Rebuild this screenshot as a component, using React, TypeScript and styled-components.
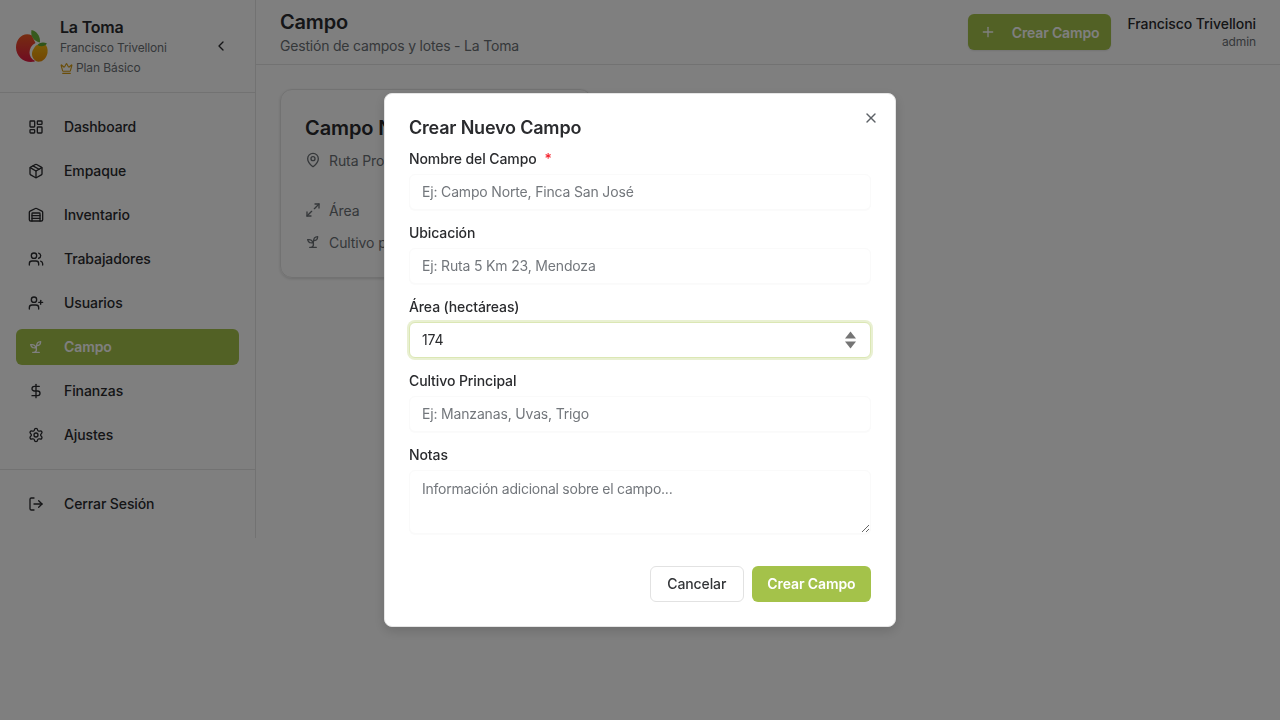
import styled, { createGlobalStyle } from 'styled-components'
import {
  ChevronLeft,
  Crown,
  DollarSign,
  LayoutDashboard,
  LogOut,
  MapPin,
  Maximize2,
  Package,
  Plus,
  Settings,
  UserPlus,
  Users,
  Warehouse,
  X,
} from 'lucide-react'

const GlobalStyle = createGlobalStyle`
  html, body {
    margin: 0;
    background: #fff;
  }
  * {
    box-sizing: border-box;
  }
  body {
    font-family: Inter, "Liberation Sans", sans-serif;
    color: #2a2b2e;
    letter-spacing: -0.1px;
  }
`

const Page = styled.div`
  display: flex;
  align-items: flex-start;
  min-height: 720px;
`

const Sidebar = styled.aside`
  width: 256px;
  flex: none;
  border-right: 1px solid #e5e5e5;
`

const Brand = styled.div`
  height: 93px;
  display: flex;
  align-items: center;
  padding: 0 16px;
  border-bottom: 1px solid #e5e5e5;
`

const BrandText = styled.div`
  margin-left: 12px;
  padding-bottom: 1px;
  flex: 1;
`

const BrandName = styled.div`
  font-size: 16px;
  line-height: 22px;
  font-weight: 600;
  letter-spacing: -0.2px;
  margin-top: 3px;
`

const BrandUser = styled.div`
  font-size: 12px;
  line-height: 20px;
  letter-spacing: -0.15px;
  color: #6b7075;
`

const Plan = styled.div`
  display: flex;
  align-items: center;
  gap: 3px;
  font-size: 12px;
  line-height: 20px;
  letter-spacing: -0.1px;
  color: #6b7075;
  svg {
    color: #d49b12;
  }
`

const Collapse = styled.button`
  border: 0;
  background: none;
  padding: 0;
  display: flex;
  margin-right: 10px;
  color: #2a2b2e;
`

const Nav = styled.nav`
  display: flex;
  flex-direction: column;
  gap: 8px;
  padding: 16px 16px 16px;
`

const NavItem = styled.a<{ $active?: boolean }>`
  height: 36px;
  display: flex;
  align-items: center;
  gap: 20px;
  padding: 0 12px;
  border-radius: 6px;
  font-size: 14px;
  font-weight: ${({ $active }) => ($active ? 600 : 450)};
  color: ${({ $active }) => ($active ? '#fff' : '#2a2b2e')};
  background: ${({ $active }) => ($active ? '#a4c24a' : 'transparent')};
`

const NavLabel = styled.span`
  margin-top: -2px;
`

const SidebarFooter = styled.div`
  border-top: 1px solid #e5e5e5;
  padding: 16px;
`

const Main = styled.main`
  flex: 1;
  min-width: 0;
`

const Header = styled.header`
  height: 65px;
  display: flex;
  align-items: center;
  justify-content: space-between;
  padding: 0 24px;
  border-bottom: 1px solid #e5e5e5;
`

const PageTitle = styled.h1`
  margin: 0;
  font-size: 20px;
  line-height: 28px;
  font-weight: 600;
  letter-spacing: -0.2px;
`

const PageSubtitle = styled.p`
  margin: 0;
  font-size: 14px;
  line-height: 20px;
  letter-spacing: -0.2px;
  color: #6b7075;
`

const HeaderRight = styled.div`
  display: flex;
  align-items: center;
  gap: 16px;
`

const Button = styled.button<{ $outline?: boolean }>`
  height: 36px;
  display: flex;
  align-items: center;
  font-family: inherit;
  font-size: 14px;
  letter-spacing: -0.1px;
  border-radius: 6px;
  padding: ${({ $outline }) => ($outline ? '0 16.5px 2px' : '0 15.5px 2px')};
  color: ${({ $outline }) => ($outline ? '#333538' : '#fff')};
  background: ${({ $outline }) => ($outline ? '#fff' : '#a4c24a')};
  border: ${({ $outline }) => ($outline ? '1px solid #e2e2e2' : '0')};
  font-weight: ${({ $outline }) => ($outline ? 500 : 600)};
`

const HeaderButton = styled(Button)`
  gap: 16px;
  padding: 0 12px;
  letter-spacing: -0.15px;
  box-shadow: 0 1px 2px rgba(0, 0, 0, 0.1);
`

const UserBox = styled.div`
  text-align: right;
  margin-top: -1px;
`

const UserName = styled.div`
  font-size: 14px;
  line-height: 20px;
  font-weight: 500;
  letter-spacing: -0.07px;
`

const UserRole = styled.div`
  font-size: 12px;
  line-height: 16px;
  color: #6b7075;
`

const Content = styled.div`
  padding: 24px;
`

const Card = styled.section`
  width: 312px;
  height: 189px;
  padding: 24px;
  border: 1px solid #e5e5e5;
  border-radius: 12px;
  box-shadow: 0 1px 3px rgba(0, 0, 0, 0.15);
  overflow: hidden;
`

const CardTitle = styled.h2`
  margin: 0;
  font-size: 20px;
  line-height: 28px;
  font-weight: 600;
  white-space: nowrap;
`

const CardRow = styled.div<{ $gap?: number }>`
  display: flex;
  align-items: center;
  gap: 8px;
  height: 20px;
  margin-top: ${({ $gap }) => $gap ?? 12}px;
  font-size: 14px;
  color: #6b7075;
  white-space: nowrap;
  svg {
    flex: none;
  }
`

const Overlay = styled.div`
  position: fixed;
  inset: 0;
  background: rgba(0, 0, 0, 0.5);
  display: flex;
  align-items: center;
  justify-content: center;
`

const Dialog = styled.form`
  position: relative;
  width: 512px;
  height: 534px;
  padding: 20px 24px 24px;
  background: #fff;
  border: 1px solid #e5e5e5;
  border-radius: 8px;
  box-shadow: 0 4px 12px rgba(0, 0, 0, 0.15);
`

const DialogTitle = styled.h2`
  margin: 0 0 7px;
  font-size: 18px;
  line-height: 28px;
  font-weight: 600;
  letter-spacing: -0.2px;
`

const CloseButton = styled.button`
  position: absolute;
  top: 16px;
  right: 16px;
  padding: 0;
  border: 0;
  background: none;
  display: flex;
  color: #5c6166;
`

const Field = styled.div`
  position: relative;
  display: flex;
  flex-direction: column;
  margin-bottom: 13px;
`

const Label = styled.label`
  height: 25px;
  font-size: 14px;
  line-height: 20px;
  font-weight: 500;
`

const Required = styled.span`
  margin-left: 8px;
  color: #f5222d;
`

const Input = styled.input`
  height: 36px;
  width: 100%;
  padding: 0 12px 2px;
  border: 1px solid #fafafa;
  border-radius: 6px;
  background: #fff;
  box-shadow: 0 1px 1px rgba(0, 0, 0, 0.02);
  font-family: inherit;
  font-size: 14px;
  letter-spacing: -0.17px;
  color: #2a2b2e;
  outline: none;
  &::placeholder {
    color: #73777c;
    opacity: 1;
  }
  &:focus {
    border-color: #dbe7b4;
    box-shadow: 0 0 0 2px #e9f0d2;
  }
  &::-webkit-inner-spin-button {
    appearance: none;
  }
`

const Spinner = styled.svg`
  position: absolute;
  right: 15px;
  bottom: 9px;
  pointer-events: none;
`

const TextArea = styled.textarea`
  display: block;
  height: 64px;
  width: 100%;
  padding: 8px 12px;
  border: 1px solid #fafafa;
  border-radius: 6px;
  box-shadow: 0 1px 1px rgba(0, 0, 0, 0.02);
  font-family: inherit;
  font-size: 14px;
  line-height: 20px;
  letter-spacing: -0.25px;
  outline: none;
  &::placeholder {
    color: #73777c;
    opacity: 1;
  }
`

const Actions = styled.div`
  display: flex;
  justify-content: flex-end;
  gap: 8px;
  margin-top: 32px;
`

const Logo = () => (
  <svg width="32" height="32" viewBox="0 0 32 32" style={{ flex: 'none' }}>
    <defs>
      <linearGradient id="apple" x1="0" y1="0" x2="0" y2="1">
        <stop offset="0" stopColor="#ee5a22" />
        <stop offset="1" stopColor="#e01a44" />
      </linearGradient>
      <linearGradient id="pear" x1="0" y1="0" x2="0" y2="1">
        <stop offset="0" stopColor="#f2b90f" />
        <stop offset="1" stopColor="#e88c08" />
      </linearGradient>
    </defs>
    <path
      d="M16 5.500C8 1.500 0 8 0 17.500 0 26 7 32 15 32c1.800 0 3.200-.3 4.200-.9-3.700-2-5.700-5-5.700-8.600 0-4 2-7.300 6-9.500L17 8z"
      fill="url(#apple)"
    />
    <path
      d="M20 15.500c2.500-1.500 5.500-.5 8.500-1.500 2.500 1.500 3.500 5 3 9-1 5-4.500 8.800-9 8.800-3.500-.5-7-4-6.500-8.800.3-3 2.500-5.500 4-7.500z"
      fill="url(#pear)"
    />
    <path d="M15.500 0c4.500 1 8.500 5 8.500 11 0 .5 0 1-.2 1.500-5-1-9.800-5.500-8.300-12.500z" fill="#6fb43a" />
    <path d="M21.500 15c1.500-2.500 6-3.500 9.500-1.500-2 3-6.500 3.500-9.500 1.500z" fill="#5ea832" />
  </svg>
)

// older lucide seedling: a stem on a base line with two narrow leaves
const SproutIcon = () => (
  <svg
    width="16"
    height="16"
    viewBox="0 0 24 24"
    fill="none"
    stroke="currentColor"
    strokeWidth="2"
    strokeLinecap="round"
    strokeLinejoin="round"
  >
    <path d="M7 20h10" />
    <path d="M10 20c5.500-2.500.8-6.400 3-10" />
    <path d="M9.500 9.400c1.100.8 1.800 2.200 2.300 3.700-2 .4-3.500.4-4.800-.3-1.200-.6-2.300-1.900-3-4.200 2.800-.5 4.400 0 5.500.8z" />
    <path d="M14.100 6a7 7 0 0 0-1.100 4c1.900-.1 3.300-.6 4.300-1.400 1-1 1.600-2.300 1.700-4.600-2.700.1-4 1-4.900 2z" />
  </svg>
)

const navItems = [
  { label: 'Dashboard', Icon: LayoutDashboard },
  { label: 'Empaque', Icon: Package },
  { label: 'Inventario', Icon: Warehouse },
  { label: 'Trabajadores', Icon: Users },
  { label: 'Usuarios', Icon: UserPlus },
  { label: 'Campo', Icon: SproutIcon, active: true },
  { label: 'Finanzas', Icon: DollarSign },
  { label: 'Ajustes', Icon: Settings },
]

export default function App() {
  return (
    <Page>
      <GlobalStyle />
      <Sidebar>
        <Brand>
          <Logo />
          <BrandText>
            <BrandName>La Toma</BrandName>
            <BrandUser>Francisco Trivelloni</BrandUser>
            <Plan>
              <Crown size={13} />
              Plan Básico
            </Plan>
          </BrandText>
          <Collapse type="button">
            <ChevronLeft size={16} />
          </Collapse>
        </Brand>
        <Nav>
          {navItems.map(({ label, Icon, active }) => (
            <NavItem key={label} $active={active}>
              <Icon size={16} />
              <NavLabel>{label}</NavLabel>
            </NavItem>
          ))}
        </Nav>
        <SidebarFooter>
          <NavItem>
            <LogOut size={16} />
            <NavLabel>Cerrar Sesión</NavLabel>
          </NavItem>
        </SidebarFooter>
      </Sidebar>
      <Main>
        <Header>
          <div>
            <PageTitle>Campo</PageTitle>
            <PageSubtitle>Gestión de campos y lotes - La Toma</PageSubtitle>
          </div>
          <HeaderRight>
            <HeaderButton type="button">
              <Plus size={16} />
              Crear Campo
            </HeaderButton>
            <UserBox>
              <UserName>Francisco Trivelloni</UserName>
              <UserRole>admin</UserRole>
            </UserBox>
          </HeaderRight>
        </Header>
        <Content>
          <Card>
            <CardTitle>Campo Norte</CardTitle>
            <CardRow $gap={8}>
              <MapPin size={16} />
              Ruta Provincial 5
            </CardRow>
            <CardRow $gap={30}>
              <Maximize2 size={16} />
              Área
            </CardRow>
            <CardRow>
              <SproutIcon />
              Cultivo principal
            </CardRow>
          </Card>
        </Content>
      </Main>
      <Overlay>
        <Dialog onSubmit={(e) => e.preventDefault()}>
          <CloseButton type="button">
            <X size={16} />
          </CloseButton>
          <DialogTitle>Crear Nuevo Campo</DialogTitle>
          <Field>
            <Label>
              Nombre del Campo<Required>*</Required>
            </Label>
            <Input placeholder="Ej: Campo Norte, Finca San José" />
          </Field>
          <Field>
            <Label>Ubicación</Label>
            <Input placeholder="Ej: Ruta 5 Km 23, Mendoza" />
          </Field>
          <Field>
            <Label>Área (hectáreas)</Label>
            <Input type="number" defaultValue={174} autoFocus />
            <Spinner width="11" height="18" viewBox="0 0 11 18">
              <path d="M5.500 0.500 11 7.500H0z" fill="#757575" />
              <path d="M5.500 17.500 11 10.500H0z" fill="#757575" />
            </Spinner>
          </Field>
          <Field>
            <Label>Cultivo Principal</Label>
            <Input placeholder="Ej: Manzanas, Uvas, Trigo" />
          </Field>
          <Field>
            <Label>Notas</Label>
            <TextArea placeholder="Información adicional sobre el campo..." />
          </Field>
          <Actions>
            <Button type="button" $outline>
              Cancelar
            </Button>
            <Button type="submit">Crear Campo</Button>
          </Actions>
        </Dialog>
      </Overlay>
    </Page>
  )
}
